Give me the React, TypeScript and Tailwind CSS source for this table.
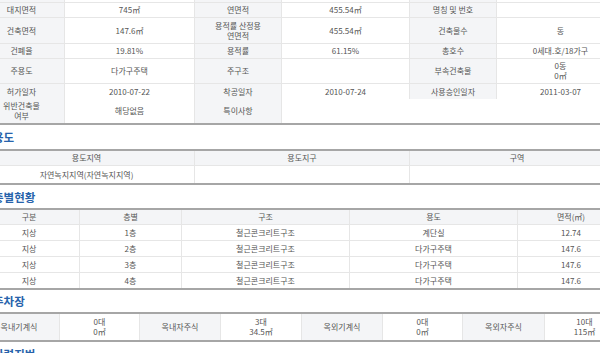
import React from 'react'

const FONT = { fontFamily: '"Noto Sans CJK KR", "Noto Sans", sans-serif' }

type Cell = { text?: string; label?: boolean; span?: number }

function Cells({ cells, header }: { cells: Cell[]; header?: boolean }) {
  return (
    <>
      {cells.map((c, i) => (
        <div
          key={i}
          className={
            'flex items-center justify-center text-center whitespace-pre-line leading-[10px] border-r border-[#e6e6e6] ' +
            (c.label || header ? 'bg-[#f4f5f7]' : 'bg-white')
          }
          style={c.span ? { gridColumn: `span ${c.span} / span ${c.span}` } : undefined}
        >
          {c.text}
        </div>
      ))}
    </>
  )
}

function Heading({ title, h }: { title: string; h: string }) {
  return (
    <div className={`${h} flex items-center pl-[14px] pt-[2px] text-[11.5px] font-bold text-[#2763ab]`}>
      {title}
    </div>
  )
}

const L = (text: string): Cell => ({ text, label: true })
const V = (text = ''): Cell => ({ text })

export default function App() {
  const topCols = 'grid grid-cols-[86px_130px_87px_128px_87px_128px]'
  const topRows: { h: string; cells: Cell[]; last?: boolean }[] = [
    { h: 'h-[2px]', cells: [L(''), V(), L(''), V(), L(''), V()] },
    { h: 'h-[15px]', cells: [L('대지면적'), V('745㎡'), L('연면적'), V('455.54㎡'), L('명칭 및 번호'), V()] },
    { h: 'h-[26px]', cells: [L('건축면적'), V('147.6㎡'), L('용적률 산정용\n연면적'), V('455.54㎡'), L('건축물수'), V('동')] },
    { h: 'h-[15px]', cells: [L('건폐율'), V('19.81%'), L('용적률'), V('61.15%'), L('총호수'), V('0세대.호/18가구')] },
    { h: 'h-[25px]', cells: [L('주용도'), V('다가구주택'), L('주구조'), V(), L('부속건축물'), V('0동\n0㎡')] },
    { h: 'h-[16px]', cells: [L('허가일자'), V('2010-07-22'), L('착공일자'), V('2010-07-24'), L('사용승인일자'), V('2011-03-07')] },
    { h: 'h-[26px]', cells: [L('위반건축물\n여부'), V('해당없음'), L('특이사항'), { text: '', span: 3 }], last: true },
  ]

  const floors = [
    ['지상', '1층', '철근콘크리트구조', '계단실', '12.74'],
    ['지상', '2층', '철근콘크리트구조', '다가구주택', '147.6'],
    ['지상', '3층', '철근콘크리트구조', '다가구주택', '147.6'],
    ['지상', '4층', '철근콘크리트구조', '다가구주택', '147.6'],
  ]

  return (
    <div className="w-[600px] h-[353px] overflow-hidden bg-white text-[8px] text-[#555]" style={FONT}>
      <div className="w-[646px] ml-[-21px]">
        {/* 건축물 개요 */}
        <div>
          {topRows.map((r, i) => (
            <div
              key={i}
              className={`${topCols} ${r.h} ${r.last ? 'border-b-2 border-[#a6a6a6]' : i === 0 ? '' : 'border-t border-[#e6e6e6]'}`}
            >
              <Cells cells={r.cells} />
            </div>
          ))}
        </div>

        {/* 용도 */}
        <Heading title="용도" h="h-[24px]" />
        <div className="border-t-2 border-[#a6a6a6]">
          <div className="grid grid-cols-[216px_215px_215px] h-[15px] border-b border-[#e6e6e6]">
            <Cells header cells={[V('용도지역'), V('용도지구'), V('구역')]} />
          </div>
          <div className="grid grid-cols-[216px_215px_215px] h-[19px] border-b-2 border-[#a6a6a6]">
            <Cells cells={[V('자연녹지지역(자연녹지지역)'), V(), V()]} />
          </div>
        </div>

        {/* 층별현황 */}
        <Heading title="층별현황" h="h-[23px]" />
        <div className="border-t-2 border-[#a6a6a6]">
          <div className="grid grid-cols-[101px_102px_168px_168px_107px] h-[15px] border-b border-[#e6e6e6]">
            <Cells header cells={[V('구분'), V('층별'), V('구조'), V('용도'), V('면적(㎡)')]} />
          </div>
          {floors.map((f, i) => (
            <div
              key={i}
              className={
                'grid grid-cols-[101px_102px_168px_168px_107px] ' +
                (i === floors.length - 1 ? 'h-[17px] border-b-2 border-[#a6a6a6]' : 'h-[16px] border-b border-[#e6e6e6]')
              }
            >
              <Cells cells={f.map((t) => V(t))} />
            </div>
          ))}
        </div>

        {/* 주차장 */}
        <Heading title="주차장" h="h-[22px]" />
        <div className="border-t-2 border-[#a6a6a6]">
          <div className="grid grid-cols-[81px_80px_81px_81px_81px_80px_82px_80px] h-[28px] border-b-2 border-[#a6a6a6]">
            <Cells
              cells={[
                L('옥내기계식'), V('0대\n0㎡'),
                L('옥내자주식'), V('3대\n34.5㎡'),
                L('옥외기계식'), V('0대\n0㎡'),
                L('옥외자주식'), V('10대\n115㎡'),
              ]}
            />
          </div>
        </div>

        {/* 관련지번 */}
        <Heading title="관련지번" h="h-[24px]" />
      </div>
    </div>
  )
}
